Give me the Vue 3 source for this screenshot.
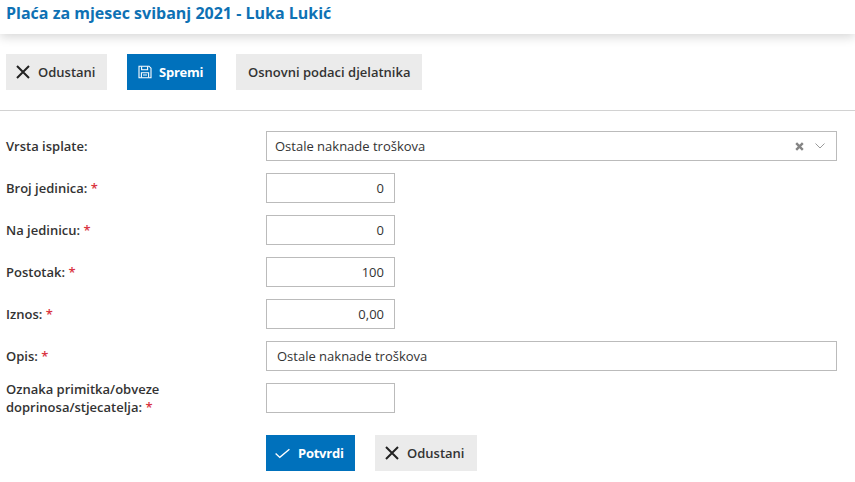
<script setup>
const rows = [
  { label: 'Broj jedinica:', value: '0' },
  { label: 'Na jedinicu:', value: '0' },
  { label: 'Postotak:', value: '100' },
  { label: 'Iznos:', value: '0,00' },
]
</script>

<template>
  <div class="page">
    <header class="head">
      <h1 class="title">Plaća za mjesec svibanj 2021 - Luka Lukić</h1>
    </header>

    <div class="toolbar">
      <button class="btn grey cancel">
        <svg width="14" height="14" viewBox="0 0 14 14"><path d="M1 1l12 12M13 1L1 13" stroke="#222" stroke-width="2" fill="none"/></svg>
        Odustani
      </button>
      <button class="btn blue save">
        <svg width="14" height="14" viewBox="0 0 14 14" fill="none" stroke="#fff" stroke-width="1.100"><path d="M1 1.200h10l2 2v9.600H1z"/><path d="M3.600 1.400v3.400h6V1.400M3.400 12.600V7.800h7.200v4.800M5 10h4"/></svg>
        Spremi
      </button>
      <button class="btn grey plain">Osnovni podaci djelatnika</button>
    </div>

    <form class="form" @submit.prevent>
      <div class="row">
        <label class="lab">Vrsta isplate:</label>
        <div class="select">
          <span class="sel-text">Ostale naknade troškova</span>
          <svg class="clear" width="9" height="9" viewBox="0 0 9 9"><path d="M1.2 1.200l6.600 6.600M7.800 1.200L1.200 7.800" stroke="#858585" stroke-width="2.400"/></svg>
          <svg class="chev" width="10" height="6" viewBox="0 0 10 6"><path d="M.5.500L5 5 9.500.500" stroke="#9a9a9a" stroke-width="1" fill="none"/></svg>
        </div>
      </div>

      <div v-for="r in rows" :key="r.label" class="row">
        <label class="lab">{{ r.label }} <i>*</i></label>
        <input class="inp num" :value="r.value" />
      </div>

      <div class="row">
        <label class="lab">Opis: <i>*</i></label>
        <input class="inp wide" value="Ostale naknade troškova" />
      </div>

      <div class="row">
        <label class="lab two">Oznaka primitka/obveze<br />doprinosa/stjecatelja: <i>*</i></label>
        <input class="inp" />
      </div>

      <div class="actions">
        <button class="btn blue ok">
          <svg width="15" height="11" viewBox="0 0 15 11"><path d="M.6 5.600l4.200 3.800L14.400 1.200" stroke="#fff" stroke-width="1.400" fill="none"/></svg>
          Potvrdi
        </button>
        <button class="btn grey cancel low">
          <svg width="14" height="14" viewBox="0 0 14 14"><path d="M1 1l12 12M13 1L1 13" stroke="#222" stroke-width="2" fill="none"/></svg>
          Odustani
        </button>
      </div>
    </form>
  </div>
</template>

<style>
html, body { margin: 0; background: #fff; }
</style>

<style scoped>
.page {
  width: 855px;
  height: 482px;
  overflow: hidden;
  font-family: "Open Sans", sans-serif;
  font-size: 13px;
  color: #333;
}
.head {
  height: 34px;
  padding-left: 6px;
  box-shadow: 0 3px 10px rgba(0, 0, 0, 0.16);
}
.title {
  margin: 0;
  font-size: 16px;
  font-weight: 700;
  line-height: 26px;
  color: #0e71b4;
}
.toolbar {
  display: flex;
  gap: 20px;
  padding: 20px 6px;
  border-bottom: 1px solid #d2d2d2;
  height: 36px;
}
.btn {
  display: flex;
  align-items: center;
  height: 36px;
  border: 0;
  padding: 0;
  font-family: inherit;
  font-size: 13px;
  font-weight: 600;
  white-space: nowrap;
}
.grey { background: #ebebeb; color: #333; }
.blue { background: #0071bc; color: #fff; font-weight: 700; letter-spacing: -0.25px; }
.cancel { width: 101px; padding-left: 10px; gap: 8px; }
.low { width: 102px; }
.save { width: 89px; padding-left: 11px; gap: 7px; }
.plain { width: 186px; padding-left: 12px; }
.form { padding: 20px 18px 0 6px; }
.row {
  display: flex;
  align-items: center;
  height: 30px;
  margin-bottom: 12px;
}
.lab {
  width: 260px;
  flex: none;
  font-weight: 600;
  line-height: 18px;
}
.lab i { font-style: normal; color: #d9343f; }
.select {
  display: flex;
  align-items: center;
  box-sizing: border-box;
  width: 571px;
  height: 30px;
  border: 1px solid #bbb;
  padding: 0 11px 0 8px;
}
.sel-text { flex: 1; }
.clear { margin-right: 11px; }
.inp {
  box-sizing: border-box;
  width: 129px;
  height: 30px;
  border: 1px solid #bbb;
  border-radius: 0;
  padding: 0 10px;
  font-family: inherit;
  font-size: 13px;
  color: #333;
  outline: none;
}
.num { text-align: right; }
.wide { width: 571px; }
.actions {
  display: flex;
  gap: 20px;
  margin: 22px 0 0 260px;
}
.ok { width: 89px; padding-left: 9px; gap: 8px; }
</style>
